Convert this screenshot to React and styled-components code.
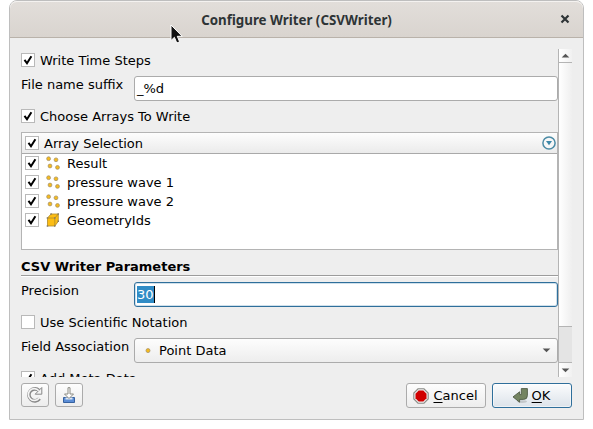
import React from 'react';
import styled, { createGlobalStyle, css } from 'styled-components';

const GlobalStyle = createGlobalStyle`
  * { box-sizing: border-box; }
  body { margin: 0; background: #fff; overflow: hidden; }
`;

const Desktop = styled.main`
  width: 593px;
  height: 429px;
  padding-left: 9px;
  position: relative;
  font: 13px/16px "DejaVu Sans", sans-serif;
  color: #000;
`;

const Dialog = styled.section`
  width: 575px;
  height: 420px;
  display: flex;
  flex-direction: column;
  background: #eeeeee;
  border: 1px solid #bebebe;
  border-radius: 8px 8px 0 0;
`;

const TitleBar = styled.header`
  height: 37px;
  flex: none;
  display: grid;
  grid-template-columns: 36px 1fr 36px;
  align-items: center;
  background: linear-gradient(#e2deda, #d9d4cf);
  border-bottom: 1px solid #b9b2aa;
  border-radius: 7px 7px 0 0;
  box-shadow: inset 0 1px 0 #f4f2f0;
`;

const Title = styled.h1`
  grid-column: 2;
  margin: 0;
  padding-top: 1px;
  font: bold 13.33px/18px "Noto Sans", sans-serif;
  text-align: center;
  color: #2e3436;
`;

const CloseButton = styled.button`
  border: 0;
  padding: 0;
  background: none;
  display: flex;
  justify-content: center;
`;

const ScrollArea = styled.div`
  height: 328px;
  flex: none;
  margin: 11px 11px 0 11px;
  display: flex;
  overflow: hidden;
`;

const Form = styled.div`
  width: 537px;
  display: flex;
  flex-direction: column;
`;

const Text = styled.span`
  white-space: pre;
`;

const CheckRow = styled.label`
  display: flex;
  flex: none;
  align-items: center;
  gap: 5px;
  height: 16px;
  margin-top: ${(p) => p.$gap}px;
  & > ${Text} { padding-top: 2px; }
`;

const Box = styled.span`
  width: 14px;
  height: 14px;
  flex: none;
  background: #fff;
  border: 1px solid #b9b9b9;
  display: flex;
`;

const FieldRow = styled.div`
  display: grid;
  grid-template-columns: 113px 1fr;
  height: 25px;
  flex: none;
  margin-top: ${(p) => p.$gap}px;
  & > ${Text} { padding-top: 1px; }
`;

const control = css`
  height: 25px;
  border: 1px solid #ababab;
  border-radius: 3px;
  display: flex;
  align-items: center;
`;

const Field = styled.div`
  ${control}
  background: #fff;
  padding-left: 2px;
  ${(p) => p.$focused && css`
    border-color: #2f6f9b;
    box-shadow: inset 0 0 0 1px #cfe0eb;
  `}
`;

const Selected = styled.span`
  background: #308cc6;
  color: #fff;
  height: 17px;
  line-height: 18px;
  border-right: 1px solid #000;
`;

const Combo = styled.div`
  ${control}
  background: linear-gradient(#fdfdfd, #ededed);
  padding: 0 6px 0 10px;
  gap: 8px;
  & > svg:last-child { margin-left: auto; }
`;

const Tree = styled.div`
  height: 118px;
  flex: none;
  margin-top: 8px;
  background: #fff;
  border: 1px solid #b4b4b4;
`;

const TreeHeader = styled.div`
  height: 21px;
  display: flex;
  align-items: center;
  gap: 5px;
  padding: 0 1px 0 3px;
  border-bottom: 1px solid #a9a9a9;
  background: linear-gradient(#fdfdfd, #ebebeb);
  & > ${Text} { padding-top: 1px; }
  & > svg { margin-left: auto; }
`;

const TreeRow = styled.div`
  height: 19px;
  display: flex;
  align-items: center;
  padding: 0 0 1px 3px;
  & > ${Text} { padding-top: 1px; }
  & > svg { margin: 0 6px; }
`;

const Heading = styled.h2`
  margin: 8px 0 0;
  height: 19px;
  flex: none;
  font: bold 13px/18px "DejaVu Sans", sans-serif;
  white-space: pre;
  border-bottom: 1px solid #fff;
  box-shadow: inset 0 -1px 0 #9c9c9c;
`;

const ScrollBar = styled.div`
  width: 14px;
  border-left: 1px solid #b4b4b4;
  display: flex;
  flex-direction: column;
  background: #e4e4e4;
`;

const Arrow = styled.div`
  height: ${(p) => (p.$down ? 15 : 14)}px;
  display: flex;
  align-items: center;
  justify-content: center;
  background: linear-gradient(90deg, #fff, #f1f1f1);
  border-bottom: ${(p) => (p.$down ? '0' : '1px solid #b4b4b4')};
  border-top: ${(p) => (p.$down ? '1px solid #b4b4b4' : '0')};
`;

const Thumb = styled.div`
  height: 264px;
  border-bottom: 1px solid #b4b4b4;
  background: linear-gradient(90deg, #fff, #efefef);
  margin-bottom: auto;
`;

const Footer = styled.footer`
  display: flex;
  gap: 6px;
  padding: 6px 11px 0;
`;

const Button = styled.button`
  width: 80px;
  height: 25px;
  padding: 0 ${(p) => (p.$primary ? 2 : 1)}px 0 0;
  display: flex;
  align-items: center;
  justify-content: center;
  gap: 4px;
  border: 1px solid ${(p) => (p.$primary ? '#2f6f9b' : '#ababab')};
  border-radius: 3px;
  background: ${(p) => (p.$primary ? 'linear-gradient(#fbfcfd, #dce3ea)' : 'linear-gradient(#fdfdfd, #ededed)')};
  box-shadow: ${(p) => (p.$primary ? 'inset 0 0 0 1px #ffffff80' : 'none')};
  font: 13px/16px "DejaVu Sans", sans-serif;
  color: #000;
  u { text-underline-offset: 2px; text-decoration-thickness: 1px; text-decoration-skip-ink: none; }
`;

const ToolButton = styled(Button)`
  width: 28px;
  height: 24px;
  padding: 0;
`;

const Spacer = styled.span`
  flex: 1;
`;

const Pointer = styled.svg`
  position: absolute;
  left: 170px;
  top: 24px;
`;

const Check = ({ on = true }) => (
  <Box>
    {on && (
      <svg width="12" height="12" viewBox="0 0 12 12">
        <path d="M2.5 5.8 5 9.3 9.4 2.2" fill="none" stroke="#000" strokeWidth="2" />
      </svg>
    )}
  </Box>
);

const dots = [[3.6, 2.7], [11, 3.8], [5, 10], [12.5, 11.4]];
const PointsIcon = () => (
  <svg width="16" height="14" viewBox="0 0 16 14">
    {dots.map(([x, y]) => (
      <circle key={x} cx={x} cy={y} r="1.9" fill="#f6bb1c" stroke="#a8946a" strokeWidth=".8" />
    ))}
  </svg>
);

const CubeIcon = () => (
  <svg width="16" height="16" viewBox="0 0 16 16">
    <path d="M2.5 6 6 2H13.3V9.4L9.8 14H2.5Z" fill="#fcbd14" />
    <path d="M2.5 6H9.8V14H2.5ZM2.5 6 6 2H13.3L9.8 6M13.3 2V9.4L9.8 14" fill="none" stroke="#b08a26" strokeWidth=".8" />
    <path d="M1.7 5.3h1.5v1.5H1.7zM9 5.3h1.5v1.5H9zM1.7 13.2h1.5v1.5H1.7zM9 13.2h1.5v1.5H9zM5.3 1.3h1.5v1.5H5.3zM12.5 1.3H14v1.5h-1.5zM12.5 8.6H14v1.5h-1.5z" fill="#857c69" />
  </svg>
);

const Caret = ({ up }) => (
  <svg width="9" height="5" viewBox="0 0 9 5">
    <path d={up ? 'M.7 4.5 4.5.7 8.3 4.5Z' : 'M.7.5 4.5 4.3 8.3.5Z'} fill="#555" />
  </svg>
);

const arrays = ['Result', 'pressure wave 1', 'pressure wave 2', 'GeometryIds'];

export default function App() {
  return (
    <Desktop>
      <GlobalStyle />
      <Dialog>
        <TitleBar>
          <Title>Configure Writer (CSVWriter)</Title>
          <CloseButton aria-label="Close">
            <svg width="10" height="10" viewBox="0 0 10 10">
              <path d="M1.5 1.5 8.5 8.5M8.5 1.5 1.5 8.5" stroke="#2e3436" strokeWidth="2.2" />
            </svg>
          </CloseButton>
        </TitleBar>
        <ScrollArea>
          <Form>
            <CheckRow $gap={3}><Check /><Text>Write Time Steps</Text></CheckRow>
            <FieldRow $gap={8}><Text>File name suffix</Text><Field>_%d</Field></FieldRow>
            <CheckRow $gap={7}><Check /><Text>Choose Arrays To Write</Text></CheckRow>
            <Tree>
              <TreeHeader>
                <Check />
                <Text>Array Selection</Text>
                <svg width="14" height="14" viewBox="0 0 14 14">
                  <circle cx="7" cy="7" r="6.1" fill="#f7f7f7" stroke="#4b8ba5" strokeWidth="1.5" />
                  <path d="M4 5H10L7 9.3Z" fill="#3c87a8" />
                </svg>
              </TreeHeader>
              {arrays.map((name) => (
                <TreeRow key={name}>
                  <Check />
                  {name === 'GeometryIds' ? <CubeIcon /> : <PointsIcon />}
                  <Text>{name}</Text>
                </TreeRow>
              ))}
            </Tree>
            <Heading>CSV Writer Parameters</Heading>
            <FieldRow $gap={5}><Text>Precision</Text><Field $focused><Selected>30</Selected></Field></FieldRow>
            <CheckRow $gap={7}><Check on={false} /><Text>Use Scientific Notation</Text></CheckRow>
            <FieldRow $gap={8}>
              <Text>Field Association</Text>
              <Combo>
                <svg width="6" height="6"><circle cx="3" cy="2.6" r="2" fill="#f6bb1c" stroke="#a8946a" strokeWidth=".8" /></svg>
                <Text>Point Data</Text>
                <Caret />
              </Combo>
            </FieldRow>
            <CheckRow $gap={7}><Check /><Text>Add Meta Data</Text></CheckRow>
          </Form>
          <ScrollBar>
            <Arrow><Caret up /></Arrow>
            <Thumb />
            <Arrow $down><Caret /></Arrow>
          </ScrollBar>
        </ScrollArea>
        <Footer>
          <ToolButton aria-label="Reset">
            <svg width="18" height="18" viewBox="0 0 18 18">
              <path d="M13.5 12.7A6 6 0 1 1 13 4.5" fill="none" stroke="#888" strokeWidth="3.6" />
              <path d="M15.8 1.5V8.2H9.2Z" fill="#f4f4f4" stroke="#888" />
              <path d="M13.1 12A5.9 5.9 0 1 1 12.8 4.7" fill="none" stroke="#f4f4f4" strokeWidth="1.7" />
            </svg>
          </ToolButton>
          <ToolButton aria-label="Save">
            <svg width="16" height="16" viewBox="0 0 16 16">
              <path d="M2.5 10.5H13.5V15.5H2.5Z" fill="#5b8dd6" stroke="#36619f" />
              <path d="M4.5 10.5H11.5V12.5H4.5Z" fill="#dce6f3" />
              <path d="M7 .7H9V7H12.5L8 11.5 3.5 7H7Z" fill="#fff" stroke="#8b8b83" />
            </svg>
          </ToolButton>
          <Spacer />
          <Button>
            <svg width="16" height="16" viewBox="0 0 16 16">
              <path d="M5 .8H11L15.2 5V11L11 15.2H5L.8 11V5Z" fill="#eee" stroke="#8b8b86" strokeWidth="1.1" />
              <path d="M5.7 2.5H10.3L13.5 5.7V10.3L10.3 13.5H5.7L2.5 10.3V5.7Z" fill="#d00000" />
            </svg>
            <span><u>C</u>ancel</span>
          </Button>
          <Button $primary>
            <svg width="16" height="16" viewBox="0 0 16 16">
              <ellipse cx="10" cy="13.6" rx="5" ry="1.4" fill="#c3c8cb" />
              <path d="M9.3.6H15.4V7.5Q15.4 11.4 11.5 11.4H7.6V14.2L1 8.9 7.6 3.8V6.6H9.3Z" fill="#738461" stroke="#4f5b46" strokeWidth=".9" />
            </svg>
            <span><u>O</u>K</span>
          </Button>
        </Footer>
      </Dialog>
      <Pointer width="15" height="21" viewBox="0 0 15 21">
        <path d="M1 1V16.5L4.4 13.3 6.8 19 9.6 17.8 7.3 12.3H12.2Z" fill="#111" stroke="#fff" />
      </Pointer>
    </Desktop>
  );
}
